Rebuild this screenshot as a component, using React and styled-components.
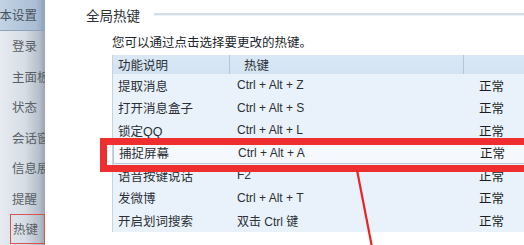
import React from 'react';
import styled, { createGlobalStyle } from 'styled-components';

const GlobalStyle = createGlobalStyle`
    body {
        margin: 0;
        background: #ffffff;
        font-family: "Liberation Sans", "Noto Sans CJK SC", sans-serif;
    }
`

const StyledWindow = styled.div`
    position: relative;
    width: 524px;
    height: 245px;
    overflow: hidden;
    display: flex;
    background: #ffffff;
`

const StyledSidebar = styled.div`
    width: 45px;
    flex-shrink: 0;
    overflow: hidden;
    background: linear-gradient(to right, #e6ebf0 0%, #d6dde5 55%, #b4bec9 88%, #9aa5b1 100%);
`

const StyledNavItem = styled.div`
    height: 30.5px;
    display: flex;
    align-items: center;
    box-sizing: border-box;
    padding-left: ${p => (p.$clipped ? '0' : '12px')};
    font-size: 12.5px;
    color: #5a5f66;
    white-space: nowrap;
    background: ${p => (p.$active ? 'linear-gradient(to right, #c2d3e4, #a9bed4 80%, #8fa4ba)' : 'transparent')};
    border-bottom: ${p => (p.$active ? '1px solid #8ea3b9' : 'none')};
`

const StyledClipText = styled.span`
    margin-left: -13px;
    color: #4a5360;
`

const StyledMarkedNav = styled.div`
    height: 30px;
    margin-left: 10px;
    box-sizing: border-box;
    border: 1px solid #d9534f;
    display: flex;
    align-items: center;
    padding-left: 2px;
    font-size: 12.5px;
    color: #5a5f66;
    white-space: nowrap;
`

const StyledMain = styled.div`
    flex: 1;
    display: flex;
    flex-direction: column;
    padding: 6px 0 0 41px;
`

const StyledGroupHeader = styled.div`
    height: 18px;
    display: flex;
    align-items: center;
    gap: 14px;
    font-size: 13.5px;
    color: #2e3238;
    white-space: nowrap;
`

const StyledGroupLine = styled.div`
    flex: 1;
    height: 2px;
    margin-top: -3px;
    background: #d5dee7;
    box-shadow: 0 1px 1px #eef1f4;
`

const StyledBody = styled.div`
    padding-left: 26px;
`

const StyledDesc = styled.div`
    margin-top: 11px;
    height: 16px;
    line-height: 16px;
    font-size: 12.5px;
    color: #22262b;
    white-space: nowrap;
`

const StyledTable = styled.div`
    margin-top: 4px;
    width: 420px;
    border-left: 1px solid #c9d3dc;
    background: #e9f2fa;
`

const StyledRow = styled.div`
    display: grid;
    grid-template-columns: 116px 234px 1fr;
    height: ${p => (p.$head ? '19px' : '22.5px')};
    align-items: center;
    box-sizing: border-box;
    color: #2c3036;
    white-space: nowrap;
    background: ${p => (p.$head ? 'linear-gradient(#dae8f5, #d3e3f2)' : p.$selected ? '#f5f9fd' : 'transparent')};
    border: ${p => (p.$selected ? '1px solid #b9c6d2' : 'none')};
`

const StyledCell = styled.div`
    height: 100%;
    display: flex;
    align-items: center;
    padding-left: ${p => p.$pad || 5}px;
    border-left: ${p => (p.$divider ? '1px solid #b4c6d8' : 'none')};
    font-size: ${p => (p.$latin ? '12px' : '12.5px')};
    color: ${p => (p.$dark ? '#1b1e22' : 'inherit')};
`

const StyledHighlight = styled.div`
    position: absolute;
    left: 100px;
    top: 138px;
    width: 440px;
    height: 34px;
    box-sizing: border-box;
    border: 7px solid #ef2f2f;
`

const StyledArrow = styled.svg`
    position: absolute;
    left: 350px;
    top: 165px;
`

const navItems = ['登录', '主面板', '状态', '会话窗', '信息展', '提醒'];

const hotkeys = [
    ['提取消息', 'Ctrl + Alt + Z'],
    ['打开消息盒子', 'Ctrl + Alt + S'],
    ['锁定QQ', 'Ctrl + Alt + L'],
    ['捕捉屏幕', 'Ctrl + Alt + A'],
    ['语音按键说话', 'F2'],
    ['发微博', 'Ctrl + Alt + T'],
    ['开启划词搜索', '双击 Ctrl 键'],
];

const App = () => {
    return (
        <StyledWindow>
            <GlobalStyle />
            <StyledSidebar>
                <StyledNavItem $active $clipped>
                    <StyledClipText>基本设置</StyledClipText>
                </StyledNavItem>
                {navItems.map(item => (
                    <StyledNavItem key={item}>{item}</StyledNavItem>
                ))}
                <StyledMarkedNav>热键</StyledMarkedNav>
            </StyledSidebar>

            <StyledMain>
                <StyledGroupHeader>
                    全局热键
                    <StyledGroupLine />
                </StyledGroupHeader>

                <StyledBody>
                    <StyledDesc>您可以通过点击选择要更改的热键。</StyledDesc>

                    <StyledTable>
                        <StyledRow $head>
                            <StyledCell>功能说明</StyledCell>
                            <StyledCell $divider $pad={14}>热键</StyledCell>
                            <StyledCell $divider />
                        </StyledRow>
                        {hotkeys.map(([name, key]) => (
                            <StyledRow key={name} $selected={name === '捕捉屏幕'}>
                                <StyledCell>{name}</StyledCell>
                                <StyledCell $pad={8} $latin>{key}</StyledCell>
                                <StyledCell $pad={16} $dark>正常</StyledCell>
                            </StyledRow>
                        ))}
                    </StyledTable>
                </StyledBody>
            </StyledMain>

            <StyledHighlight />
            <StyledArrow width="30" height="85" viewBox="0 0 30 85">
                <line x1="7" y1="5" x2="22" y2="82" stroke="#e82424" strokeWidth="2.2" />
            </StyledArrow>
        </StyledWindow>
    );
}

export default App;
